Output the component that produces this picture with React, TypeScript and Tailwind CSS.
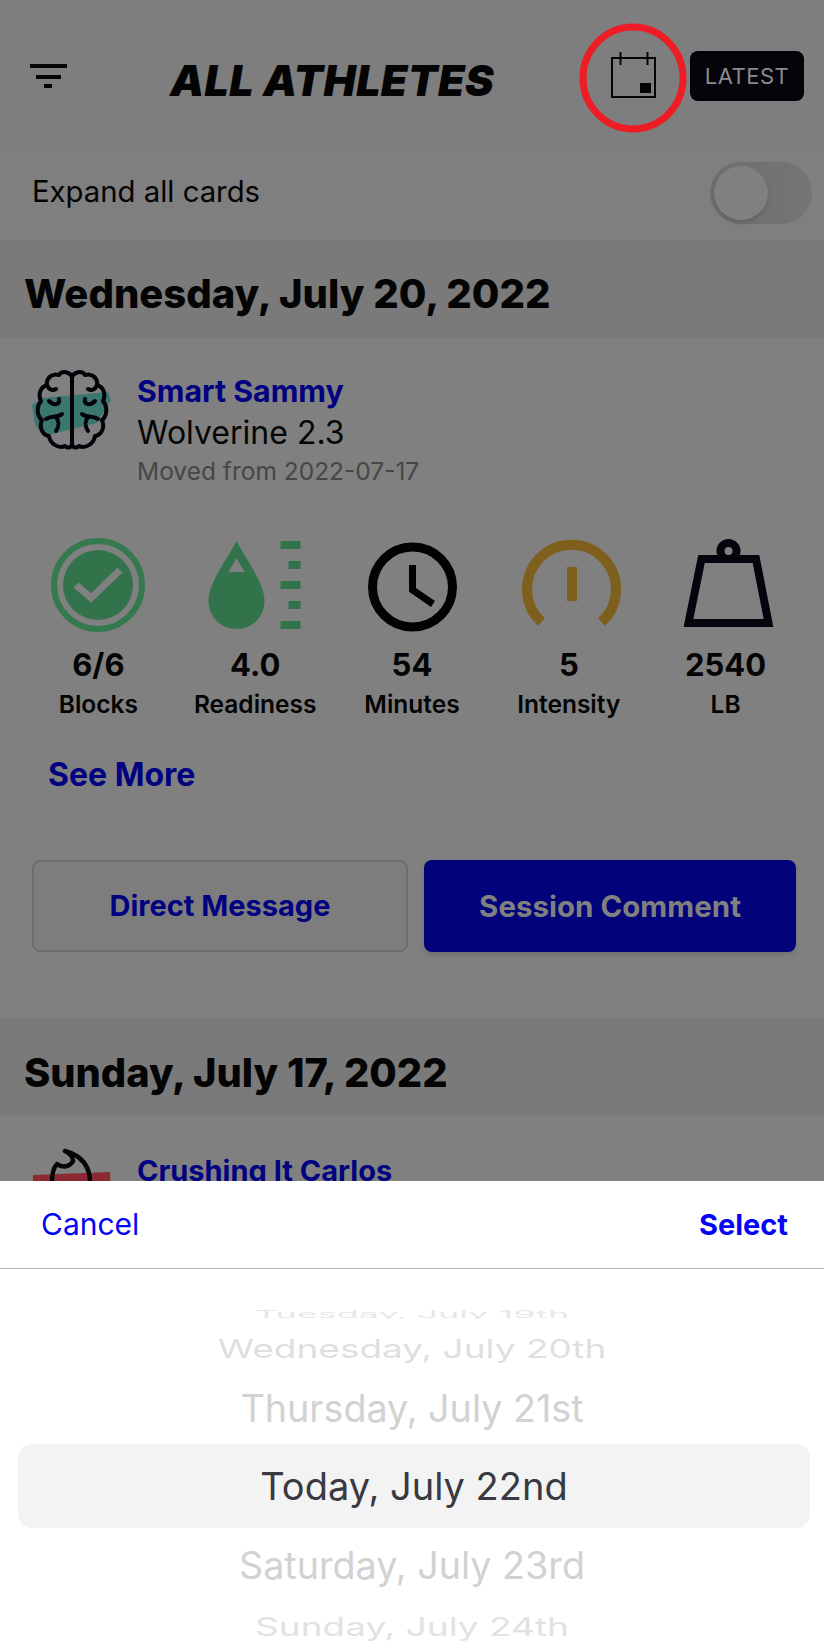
import React from "react";

const font = { fontFamily: "Inter, sans-serif" };

function BrainIcon() {
  const lobe = (
    <g fill="none" stroke="#020208" strokeWidth="4" strokeLinecap="round" strokeLinejoin="round">
      <path d="M40 7C38 2 30 0 27 5C20 3 14 8 15 15C8 17 6 25 9 31C4 37 5 46 10 50C7 57 10 65 17 66C18 74 27 79 33 76C36 79 40 77 40 74" />
      <path d="M15 15C17 20 21 21 24 19" />
      <path d="M17 31C22 36 28 35 27 29" />
      <path d="M14 49C20 45 26 48 30 44M24 47C28 52 27 56 24 61" />
    </g>
  );
  return (
    <svg viewBox="0 0 80 80" className="w-20 h-20 shrink-0">
      <path d="M0 35L10 28L76 22L79 30L74 38L65 53L12 66L3 55Z" fill="#3a776e" />
      <path d="M40 7V74" stroke="#020208" strokeWidth="4" />
      {lobe}
      <g transform="translate(80 0) scale(-1 1)">{lobe}</g>
    </svg>
  );
}

function FlameIcon() {
  return (
    <svg viewBox="0 0 80 80" className="w-20 h-20 shrink-0">
      <path d="M1 27L78 24L80 80H0Z" fill="#8c2a33" />
      <path
        d="M33 3C47 7 58 16 58 34M20 34C20 26 21 20 25 16C30 20 38 19 41 13C41 9 37 5 33 3"
        fill="none"
        stroke="#060606"
        strokeWidth="4.500"
        strokeLinecap="round"
        strokeLinejoin="round"
      />
    </svg>
  );
}

const stats = [
  {
    value: "6/6",
    label: "Blocks",
    icon: (
      <>
        <circle cx="50" cy="50" r="44" fill="none" stroke="#35794f" strokeWidth="6" />
        <circle cx="50" cy="50" r="35" fill="#33734c" />
        <path d="M28 50L43 63L72 35" fill="none" stroke="#808080" strokeWidth="7" />
      </>
    ),
  },
  {
    value: "4.0",
    label: "Readiness",
    icon: (
      <g transform="translate(0 2)">
        <path d="M31.5 4C42 24 59.5 46 59.5 64C59.5 80 47 92 31.5 92C16 92 3.500 80 3.500 64C3.500 46 21 24 31.5 4Z" fill="#33734c" />
        <path d="M31.500 21L39.500 35H23.500Z" fill="#808080" />
        <path d="M75.500 4H95.500V12H75.500ZM83.500 24H95.500V32H83.500ZM75.500 44H95.500V52H75.500ZM83.500 64H95.500V72H83.500ZM75.500 84H95.500V92H75.500Z" fill="#33734c" />
      </g>
    ),
  },
  {
    value: "54",
    label: "Minutes",
    icon: (
      <g transform="translate(0 2)">
        <circle cx="50.500" cy="50" r="40" fill="none" stroke="#020204" strokeWidth="9" />
        <path d="M50.500 28V53L71 67" fill="none" stroke="#020204" strokeWidth="7" />
      </g>
    ),
  },
  {
    value: "5",
    label: "Intensity",
    icon: (
      <g transform="translate(0 2)">
        <path d="M22.500 85A44.500 44.500 0 1 1 82.500 85" fill="none" stroke="#7f5f1c" strokeWidth="10" />
        <rect x="48" y="30" width="10" height="34" fill="#7f5f1c" />
      </g>
    ),
  },
  {
    value: "2540",
    label: "LB",
    icon: (
      <g transform="translate(0 2)">
        <circle cx="52.500" cy="14" r="8" fill="none" stroke="#04040c" strokeWidth="8" />
        <path d="M25.500 22H80L92.500 86H12.500Z" fill="none" stroke="#04040c" strokeWidth="8" />
      </g>
    ),
  },
];

export default function App() {
  return (
    <div className="relative w-[824px] h-[1652px] overflow-hidden bg-[#808080] text-[#040404] antialiased" style={font}>
      {/* Header */}
      <header className="h-[146px] flex items-center pl-[30px] pr-5 bg-[#7e7e7e]">
        <svg viewBox="0 0 37 24" className="w-[37px] h-6 mt-[6px] shrink-0">
          <path d="M0 2H37M6 13H31M14 22H22" stroke="#050505" strokeWidth="4" />
        </svg>
        <h1 className="ml-[103px] mt-[14px] text-[43px] leading-none font-black italic tracking-[0.4px] whitespace-nowrap">ALL ATHLETES</h1>
        <div className="relative ml-auto mr-[33px] w-[47px] h-[48px] mt-[2px]">
          <svg viewBox="0 0 47 48" className="w-[47px] h-[48px]">
            <path d="M2 8H45V47H2Z" fill="none" stroke="#050505" strokeWidth="2" />
            <path d="M10.500 2V15M37.500 2V15" stroke="#050505" strokeWidth="2" />
            <rect x="30" y="33" width="11" height="10" fill="#050505" />
          </svg>
          <svg viewBox="0 0 110 112" className="absolute -left-[32px] -top-[28px] w-[110px] h-[112px]">
            <ellipse cx="55" cy="56" rx="50" ry="51" fill="none" stroke="#ee1c25" strokeWidth="7" />
          </svg>
        </div>
        <button className="w-[114px] h-[50px] mt-[6px] rounded-lg bg-[#04040a] text-[#8b8b8b] text-[22px] tracking-[0.5px]">LATEST</button>
      </header>

      {/* Expand toggle */}
      <div className="h-[94px] flex items-center justify-between pl-8 pr-3 bg-[#7f7f7f]">
        <span className="text-[29.300px] -mt-[2px]">Expand all cards</span>
        <div className="w-[102px] h-[62px] rounded-full p-1 bg-gradient-to-r from-[#6e6e6e] to-[#757575]">
          <div className="w-[54px] h-[54px] rounded-full bg-[#808080] shadow-md" />
        </div>
      </div>

      {/* First session */}
      <h2 className="h-[98px] flex items-center pl-[24px] pt-[10px] text-[40px] font-extrabold bg-[#7a7a7a]">Wednesday, July 20, 2022</h2>
      <section className="h-[680px] pt-8 bg-[#808080]">
        <div className="flex pl-8 gap-[25px]">
          <BrainIcon />
          <div className="pt-[1px]">
            <p className="text-[30.300px] leading-[40px] font-bold text-[#020280]">Smart Sammy</p>
            <p className="mt-[2px] text-[32px] leading-[40px] text-[#050505]">Wolverine 2.3</p>
            <p className="-mt-[1px] text-[24.500px] leading-[38px] text-[#464646] whitespace-nowrap">Moved from 2022-07-17</p>
          </div>
        </div>
        <div className="grid grid-cols-5 px-5 mt-[45px]">
          {stats.map((s) => (
            <div key={s.label} className="flex flex-col items-center">
              <svg viewBox="0 0 100 100" className="w-[100px] h-[100px] overflow-visible">{s.icon}</svg>
              <p className="mt-[10px] text-[31px] leading-[40px] font-bold">{s.value}</p>
              <p className="mt-[3px] text-[24.500px] leading-[32px] font-semibold">{s.label}</p>
            </div>
          ))}
        </div>
        <p className="mt-[35px] ml-12 text-[32px] leading-[40px] font-bold text-[#020280]">See More</p>
        <div className="flex gap-4 mt-[65px] pl-8 pr-7">
          <button className="w-[376px] h-[92px] rounded-lg border-2 border-[#6e6e6e] bg-[#7d7d7d] text-[29px] font-bold text-[#020280]">Direct Message</button>
          <button className="w-[372px] h-[92px] rounded-lg bg-[#02027a] shadow-md text-[29.500px] font-bold text-[#808080]">Session Comment</button>
        </div>
      </section>

      {/* Second session */}
      <h2 className="h-[98px] flex items-center pl-[24px] pt-[12px] text-[39.800px] font-extrabold bg-[#7a7a7a]">Sunday, July 17, 2022</h2>
      <section className="pt-8 bg-[#808080]">
        <div className="flex pl-8 gap-[25px]">
          <FlameIcon />
          <div className="pt-[3px]">
            <p className="text-[29px] leading-[40px] font-bold text-[#020280]">Crushing It Carlos</p>
          </div>
        </div>
      </section>

      {/* Date picker sheet */}
      <div className="absolute left-0 right-0 bottom-0 h-[471px] bg-white">
        <div className="h-[88px] flex items-center justify-between pl-[41px] pr-9 border-b border-[#b5b5b5] text-[29px] text-[#0505f5]">
          <span className="text-[30px]">Cancel</span>
          <span className="font-bold">Select</span>
        </div>
        <div className="flex flex-col items-center text-[#d2d2d2]">
          <div className="mt-[41px] h-[9px] overflow-hidden flex items-start">
            <span className="block text-[36px] leading-[9px] scale-y-[0.3] text-[#e8e8e8] whitespace-nowrap">Tuesday, July 19th</span>
          </div>
          <div className="h-[60px] flex items-center text-[37px] scale-y-[0.7] text-[#dfdfdf]">Wednesday, July 20th</div>
          <div className="h-[65px] flex items-center pb-[6px] text-[37.700px]">Thursday, July 21st</div>
          <div className="self-stretch ml-[18px] mr-[14px] h-[84px] rounded-[14px] bg-[#f3f3f4] flex items-center justify-center text-[38px] text-[#393942]">Today, July 22nd</div>
          <div className="h-[74px] flex items-center text-[37.700px]">Saturday, July 23rd</div>
          <div className="h-[50px] flex items-center text-[37px] scale-y-[0.7] text-[#e2e2e2]">Sunday, July 24th</div>
        </div>
      </div>
    </div>
  );
}
